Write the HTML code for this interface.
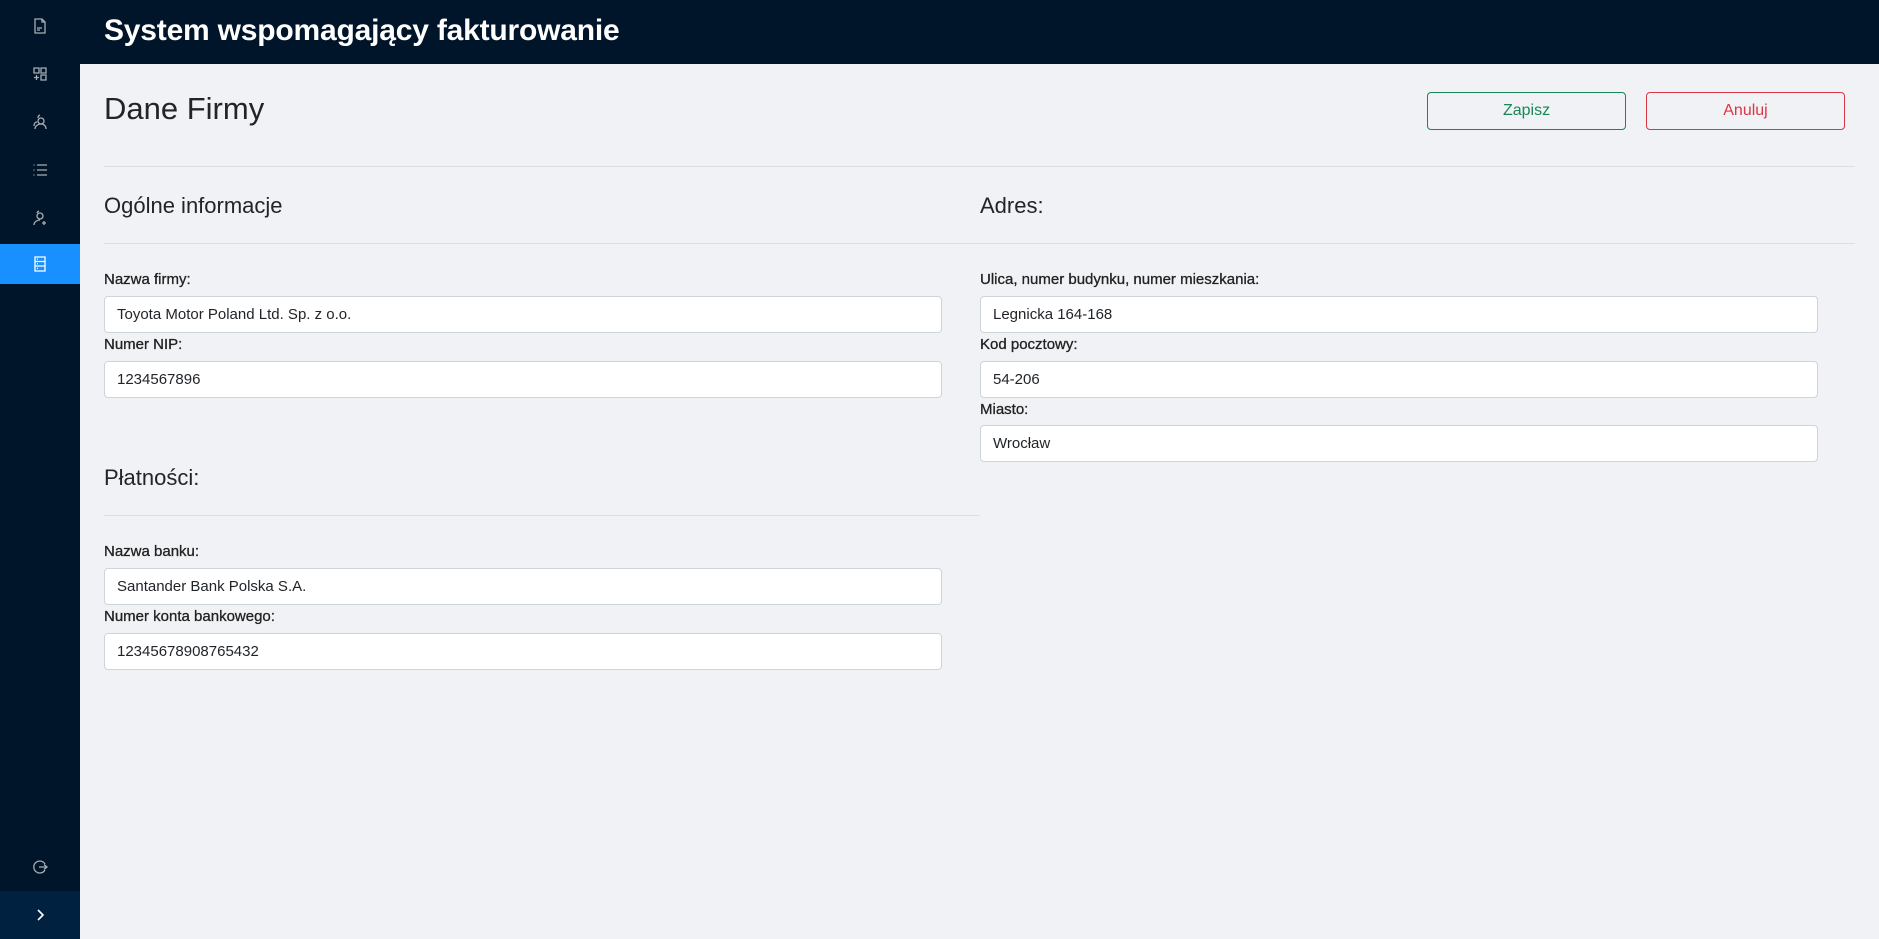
<!DOCTYPE html>
<html><head><meta charset="utf-8"><style>
*{box-sizing:border-box;margin:0;padding:0}
body{width:1879px;height:939px;background:#f0f2f5;font-family:"Liberation Sans",sans-serif;color:#212529;position:relative;overflow:hidden}
.side{position:absolute;left:0;top:0;width:80px;height:939px;background:#001529}
.item{position:absolute;left:0;width:80px;height:40px;display:flex;align-items:center;justify-content:center}
.item.act{background:#1890ff}
.item svg{width:16px;height:16px;stroke:#a6adb4;fill:none;stroke-width:1.3}
.item.act svg{stroke:#fff}
.trig{position:absolute;left:0;bottom:0;width:80px;height:48px;background:#002140;display:flex;align-items:center;justify-content:center}
.hdr{position:absolute;left:80px;top:0;right:0;height:64px;background:#001529;color:#fff;font-weight:bold;font-size:30px;padding-left:24px;line-height:62px;letter-spacing:-0.2px}
h1{position:absolute;left:104px;top:91px;font-size:31px;font-weight:normal;color:#212529}
h2{position:absolute;font-size:22px;font-weight:normal}
.hr{position:absolute;height:1px;background:#dcdee2}
.btn{position:absolute;top:92px;width:199px;height:38px;border:1px solid;border-radius:4px;font-size:16px;text-align:center;line-height:36px}
label{position:absolute;font-size:15px;font-weight:normal;color:#222;-webkit-text-stroke:0.3px #222}
.in{position:absolute;width:838px;height:37px;background:#fff;border:1px solid #ced4da;border-radius:4px;font-size:15px;padding-left:12px;line-height:35px}
</style></head><body>
<div class="side">
 <div class="item" style="top:6px"><svg viewBox="0 0 16 16"><path d="M3 1h7l3 3v11H3z M10 1v3h3 M5 10h5 M5 12h3"/></svg></div>
 <div class="item" style="top:54px"><svg viewBox="0 0 16 16"><path d="M2 2h5v5H2z M9 2h5v5H9z M9 9h5v5H9z M4.5 9v5 M2 11.5h5"/></svg></div>
 <div class="item" style="top:102px"><svg viewBox="0 0 16 16"><circle cx="9" cy="7" r="3"/><path d="M3 15c0-3 3-5 6-5s5 2 5 5 M6 4a3 3 0 0 1 2-3 M2 12c0-2 1-4 3-4"/></svg></div>
 <div class="item" style="top:150px"><svg viewBox="0 0 16 16"><path d="M1.5 3h1 M5 3h10 M1.5 8h1 M5 8h10 M1.5 13h1 M5 13h10"/></svg></div>
 <div class="item" style="top:198px"><svg viewBox="0 0 16 16"><circle cx="8" cy="6" r="3"/><path d="M2 15c0-3 3-5 6-5 M5 3a3 3 0 0 1 2-2 M12 11v4 M10 13h4"/></svg></div>
 <div class="item act" style="top:244px"><svg viewBox="0 0 16 16"><path d="M3 1h10v14H3z M3 5.5h10 M3 10h10 M5 3.2h1 M5 7.7h1 M5 12.3h1"/></svg></div>
 <div class="item" style="top:847px"><svg viewBox="0 0 16 16"><path d="M13 5A6 6 0 1 0 13 11 M7 8h8 M12 5.5l3 2.5-3 2.5"/></svg></div>
 <div class="trig"><svg width="14" height="14" viewBox="0 0 14 14"><path d="M5 2l5 5-5 5" stroke="#fff" stroke-width="1.6" fill="none"/></svg></div>
</div>
<div class="hdr">System wspomagający fakturowanie</div>
<h1>Dane Firmy</h1>
<div class="btn" style="left:1427px;border-color:#198754;color:#198754">Zapisz</div>
<div class="btn" style="left:1646px;border-color:#dc3545;color:#dc3545">Anuluj</div>
<div class="hr" style="left:104px;top:166px;width:1751px"></div>
<h2 style="left:104px;top:193px">Ogólne informacje</h2>
<h2 style="left:980px;top:193px">Adres:</h2>
<div class="hr" style="left:104px;top:243px;width:1751px"></div>
<label style="left:104px;top:271px">Nazwa firmy:</label>
<div class="in" style="left:104px;top:296px">Toyota Motor Poland Ltd. Sp. z o.o.</div>
<label style="left:104px;top:336px">Numer NIP:</label>
<div class="in" style="left:104px;top:361px">1234567896</div>
<label style="left:980px;top:271px">Ulica, numer budynku, numer mieszkania:</label>
<div class="in" style="left:980px;top:296px">Legnicka 164-168</div>
<label style="left:980px;top:336px">Kod pocztowy:</label>
<div class="in" style="left:980px;top:361px">54-206</div>
<label style="left:980px;top:401px">Miasto:</label>
<div class="in" style="left:980px;top:425px">Wrocław</div>
<h2 style="left:104px;top:465px">Płatności:</h2>
<div class="hr" style="left:104px;top:515px;width:876px"></div>
<label style="left:104px;top:543px">Nazwa banku:</label>
<div class="in" style="left:104px;top:568px">Santander Bank Polska S.A.</div>
<label style="left:104px;top:608px">Numer konta bankowego:</label>
<div class="in" style="left:104px;top:633px">12345678908765432</div>
</body></html>
